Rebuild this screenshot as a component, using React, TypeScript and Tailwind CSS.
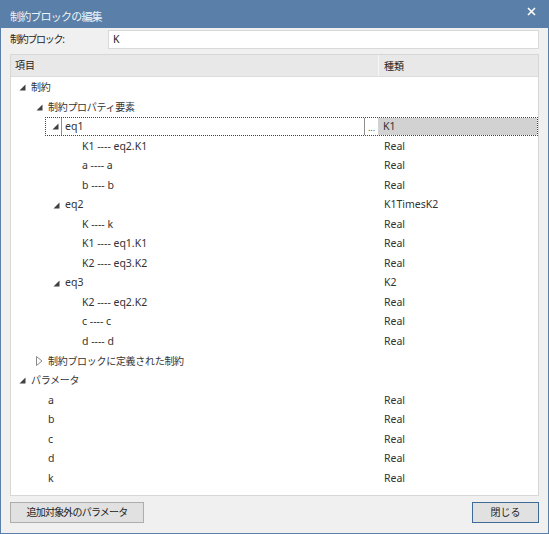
import React from 'react';

type Row = {
  level: number;
  label: string;
  type?: string;
  expand?: 'open' | 'closed';
  selected?: boolean;
};

const rows: Row[] = [
  { level: 0, label: '制約', expand: 'open' },
  { level: 1, label: '制約プロパティ要素', expand: 'open' },
  { level: 2, label: 'eq1', type: 'K1', expand: 'open', selected: true },
  { level: 3, label: 'K1 ---- eq2.K1', type: 'Real' },
  { level: 3, label: 'a ---- a', type: 'Real' },
  { level: 3, label: 'b ---- b', type: 'Real' },
  { level: 2, label: 'eq2', type: 'K1TimesK2', expand: 'open' },
  { level: 3, label: 'K ---- k', type: 'Real' },
  { level: 3, label: 'K1 ---- eq1.K1', type: 'Real' },
  { level: 3, label: 'K2 ---- eq3.K2', type: 'Real' },
  { level: 2, label: 'eq3', type: 'K2', expand: 'open' },
  { level: 3, label: 'K2 ---- eq2.K2', type: 'Real' },
  { level: 3, label: 'c ---- c', type: 'Real' },
  { level: 3, label: 'd ---- d', type: 'Real' },
  { level: 1, label: '制約ブロックに定義された制約', expand: 'closed' },
  { level: 0, label: 'パラメータ', expand: 'open' },
  { level: 1, label: 'a', type: 'Real' },
  { level: 1, label: 'b', type: 'Real' },
  { level: 1, label: 'c', type: 'Real' },
  { level: 1, label: 'd', type: 'Real' },
  { level: 1, label: 'k', type: 'Real' },
];

const isJa = (s: string) => /[\u3000-\u9fff]/.test(s);

function Glyph({ kind }: { kind?: 'open' | 'closed' }) {
  if (kind === 'open') {
    return (
      <svg width="7" height="7" viewBox="0 0 7 7" className="block">
        <polygon points="6.5,0.5 6.5,6.5 0.5,6.5" fill="#404040" />
      </svg>
    );
  }
  if (kind === 'closed') {
    return (
      <svg width="7" height="10" viewBox="0 0 7 10" className="block">
        <polygon points="0.5,0.5 6,5 0.5,9.5" fill="none" stroke="#8a8a8a" strokeWidth="1" />
      </svg>
    );
  }
  return null;
}

function TreeRow({ row }: { row: Row }) {
  const labelCls = isJa(row.label) ? 'text-[10px] tracking-[-0.3px]' : 'text-[10.5px]';
  if (row.selected) {
    return (
      <div className="flex h-[19.55px] items-center">
        <div style={{ width: row.level * 17 }} className="shrink-0" />
        <div className="flex h-[19px] flex-1 border border-dotted border-[#444]">
          <div className="flex w-[15px] shrink-0 items-center pl-[6px]">
            <Glyph kind="open" />
          </div>
          <div className="flex flex-1 items-center border-l border-r border-[#8f8f8f] bg-white pl-[3px] text-[10.5px] text-[#333]">
            {row.label}
          </div>
          <div className="flex w-[13px] shrink-0 items-end justify-center pb-[3px] text-[9px] leading-none text-[#555]">...</div>
          <div className="flex w-[159px] shrink-0 items-center bg-[#d2d2d2] pl-[5px] text-[10.5px] text-[#333]">
            {row.type}
          </div>
        </div>
      </div>
    );
  }
  return (
    <div className="flex h-[19.55px] items-center">
      <div className="flex min-w-0 flex-1 items-center">
        <div style={{ width: row.level * 17 }} className="shrink-0" />
        <div className="flex w-[20px] shrink-0 items-center pl-[8px]">
          <Glyph kind={row.expand} />
        </div>
        <span className={`${labelCls} whitespace-nowrap text-[#333]`}>{row.label}</span>
      </div>
      <div className="w-[160px] shrink-0 pl-[6px] text-[10.5px] text-[#333]">{row.type ?? ''}</div>
    </div>
  );
}

export default function App() {
  return (
    <div
      className="flex h-[534px] w-[549px] flex-col border border-[#5a7fa8] bg-[#f0f0f0]"
      style={{ fontFamily: '"Noto Sans", "Noto Sans CJK JP", sans-serif' }}
    >
      <div className="flex h-[27px] shrink-0 items-start justify-between bg-[#5a7fa8] pl-[9px] pr-[12px]">
        <span className="pt-[9px] text-[11px] leading-[14px] tracking-[-0.8px] text-[#eef3f8]">制約ブロックの編集</span>
        <svg width="9" height="9" viewBox="0 0 9 9" className="mt-[6px]">
          <path d="M1 1 L8 8 M8 1 L1 8" stroke="#ffffff" strokeWidth="1.6" />
        </svg>
      </div>

      <div className="mt-[2px] flex h-[19px] shrink-0 items-center pl-[9px] pr-[9px]">
        <span className="w-[98px] text-[10px] tracking-[-1.3px] text-[#222]">制約ブロック:</span>
        <div className="flex h-[19px] flex-1 items-center border border-[#d9d9d9] bg-white pl-[4px] text-[10.5px] text-[#222]">
          K
        </div>
      </div>

      <div className="mx-[9px] mt-[5px] flex min-h-0 flex-1 flex-col border border-[#d7d7d7] bg-white">
        <div className="flex h-[22px] shrink-0 items-center border-b border-[#dcdcdc] bg-[#e8e8e8]">
          <div className="flex-1 pl-[4px] text-[10px] text-[#222]">項目</div>
          <div className="h-full w-[160px] border-l border-[#f7f7f7] pl-[5px] text-[10px] leading-[22px] text-[#222]">種類</div>
        </div>
        <div className="flex flex-col pt-[1px]">
          {rows.map((r, i) => (
            <TreeRow key={i} row={r} />
          ))}
        </div>
      </div>

      <div className="mx-[9px] mb-[10px] mt-[6px] flex h-[21px] shrink-0 justify-between">
        <button
          type="button"
          className="w-[134px] border border-[#adadad] bg-[#e1e1e1] text-[10px] tracking-[-0.8px] text-[#222]"
        >
          追加対象外のパラメータ
        </button>
        <button
          type="button"
          className="w-[67px] border border-[#3d6a97] bg-[#e1e1e1] text-[10px] text-[#222]"
        >
          閉じる
        </button>
      </div>
    </div>
  );
}
